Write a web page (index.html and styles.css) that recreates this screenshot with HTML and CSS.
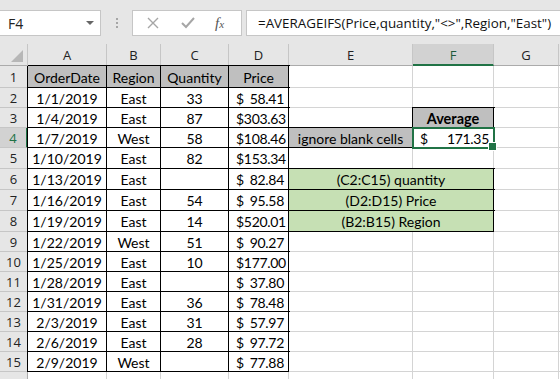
FILE: index.html
```html
<!DOCTYPE html>
<html>
<head>
<meta charset="UTF-8">
<title>AVERAGEIFS</title>
<link rel="stylesheet" href="styles.css">
</head>
<body>
<div class="topbar">
	<div class="namebox"><span>F4</span><span class="drop"></span></div>
	<div class="dots"><i></i><i></i><i></i></div>
	<div class="fnbox">
		<svg width="12" height="12" viewBox="0 0 12 12"><path d="M1 1L11 11M11 1L1 11" stroke="#a6a6a6" stroke-width="1.4" fill="none"/></svg>
		<svg width="14" height="12" viewBox="0 0 14 12"><path d="M1 6L5 10L13 1" stroke="#a6a6a6" stroke-width="2" fill="none"/></svg>
		<span class="fx">f<small>x</small></span>
	</div>
	<div class="formula">=AVERAGEIFS(Price,quantity,"&lt;&gt;",Region,"East")</div>
</div>

<div class="sheet">
	<div class="corner"><span class="tri"></span></div>
	<div class="ch">A</div><div class="ch">B</div><div class="ch">C</div><div class="ch">D</div><div class="ch">E</div><div class="ch on">F</div><div class="ch">G</div><div class="ch"></div>

	<div class="rh">1</div>
	<div class="c tb hd">OrderDate</div><div class="c tb hd">Region</div><div class="c tb hd">Quantity</div><div class="c tb hd">Price</div>
	<div class="c"></div><div class="c"></div><div class="c"></div><div class="c"></div>

	<div class="rh">2</div>
	<div class="c tb">1/1/2019</div><div class="c tb">East</div><div class="c tb">33</div><div class="c tb acc"><span>$</span><span>58.41</span></div>
	<div class="c"></div><div class="c"></div><div class="c"></div><div class="c"></div>

	<div class="rh">3</div>
	<div class="c tb">1/4/2019</div><div class="c tb">East</div><div class="c tb">87</div><div class="c tb acc"><span>$</span><span>303.63</span></div>
	<div class="c"></div><div class="c tb hd bold">Average</div><div class="c"></div><div class="c"></div>

	<div class="rh on">4</div>
	<div class="c tb">1/7/2019</div><div class="c tb">West</div><div class="c tb">58</div><div class="c tb acc"><span>$</span><span>108.46</span></div>
	<div class="c tb hd">ignore blank cells</div><div class="c tb acc sel"><span>$</span><span>171.35</span></div><div class="c"></div><div class="c"></div>

	<div class="rh">5</div>
	<div class="c tb">1/10/2019</div><div class="c tb">East</div><div class="c tb">82</div><div class="c tb acc"><span>$</span><span>153.34</span></div>
	<div class="c"></div><div class="c"></div><div class="c"></div><div class="c"></div>

	<div class="rh">6</div>
	<div class="c tb">1/13/2019</div><div class="c tb">East</div><div class="c tb"></div><div class="c tb acc"><span>$</span><span>82.84</span></div>
	<div class="c tb gr span2">(C2:C15) quantity</div><div class="c"></div><div class="c"></div>

	<div class="rh">7</div>
	<div class="c tb">1/16/2019</div><div class="c tb">East</div><div class="c tb">54</div><div class="c tb acc"><span>$</span><span>95.58</span></div>
	<div class="c tb gr span2">(D2:D15) Price</div><div class="c"></div><div class="c"></div>

	<div class="rh">8</div>
	<div class="c tb">1/19/2019</div><div class="c tb">East</div><div class="c tb">14</div><div class="c tb acc"><span>$</span><span>520.01</span></div>
	<div class="c tb gr span2">(B2:B15) Region</div><div class="c"></div><div class="c"></div>

	<div class="rh">9</div>
	<div class="c tb">1/22/2019</div><div class="c tb">West</div><div class="c tb">51</div><div class="c tb acc"><span>$</span><span>90.27</span></div>
	<div class="c"></div><div class="c"></div><div class="c"></div><div class="c"></div>

	<div class="rh">10</div>
	<div class="c tb">1/25/2019</div><div class="c tb">East</div><div class="c tb">10</div><div class="c tb acc"><span>$</span><span>177.00</span></div>
	<div class="c"></div><div class="c"></div><div class="c"></div><div class="c"></div>

	<div class="rh">11</div>
	<div class="c tb">1/28/2019</div><div class="c tb">East</div><div class="c tb"></div><div class="c tb acc"><span>$</span><span>37.80</span></div>
	<div class="c"></div><div class="c"></div><div class="c"></div><div class="c"></div>

	<div class="rh">12</div>
	<div class="c tb">1/31/2019</div><div class="c tb">East</div><div class="c tb">36</div><div class="c tb acc"><span>$</span><span>78.48</span></div>
	<div class="c"></div><div class="c"></div><div class="c"></div><div class="c"></div>

	<div class="rh">13</div>
	<div class="c tb">2/3/2019</div><div class="c tb">East</div><div class="c tb">31</div><div class="c tb acc"><span>$</span><span>57.97</span></div>
	<div class="c"></div><div class="c"></div><div class="c"></div><div class="c"></div>

	<div class="rh">14</div>
	<div class="c tb">2/6/2019</div><div class="c tb">East</div><div class="c tb">28</div><div class="c tb acc"><span>$</span><span>97.72</span></div>
	<div class="c"></div><div class="c"></div><div class="c"></div><div class="c"></div>

	<div class="rh">15</div>
	<div class="c tb">2/9/2019</div><div class="c tb">West</div><div class="c tb"></div><div class="c tb acc"><span>$</span><span>77.88</span></div>
	<div class="c"></div><div class="c"></div><div class="c"></div><div class="c"></div>

	<div class="rh"></div>
	<div class="c"></div><div class="c"></div><div class="c"></div><div class="c"></div>
	<div class="c"></div><div class="c"></div><div class="c"></div><div class="c"></div>
</div>
</body>
</html>
```

FILE: styles.css
```css
* {
	margin: 0;
	padding: 0;
	box-sizing: border-box;
}

html, body {
	width: 560px;
	height: 379px;
	overflow: hidden;
}

body {
	background: #e6e6e6;
	font-family: "Lato", "Open Sans", sans-serif;
	color: #000;
}

/* formula bar */
.topbar {
	height: 44px;
	display: flex;
	padding-top: 10px;
}

.namebox {
	width: 101px;
	height: 26px;
	background: white;
	border: 1px solid #c6c6c6;
	border-left: none;
	display: flex;
	align-items: center;
	justify-content: space-between;
	padding: 0 6px 0 8px;
	font-family: "Open Sans", sans-serif;
	font-size: 14px;
	color: #222;
}

.drop {
	width: 0;
	height: 0;
	border-left: 4px solid transparent;
	border-right: 4px solid transparent;
	border-top: 4px solid #666;
}

.dots {
	width: 31px;
	display: flex;
	flex-direction: column;
	align-items: center;
	justify-content: center;
	gap: 2px;
	height: 26px;
}

.dots i {
	width: 2px;
	height: 2px;
	background: #a6a6a6;
}

.fnbox {
	width: 110px;
	height: 26px;
	background: white;
	border: 1px solid #c6c6c6;
	display: flex;
	align-items: center;
	padding-left: 14px;
	gap: 22px;
}

.fx {
	font-family: "Liberation Serif", serif;
	font-style: italic;
	font-size: 15px;
	color: #555;
	margin-left: -2px;
}

.fx small {
	font-size: 11px;
}

.formula {
	flex: 1;
	height: 26px;
	margin-left: 4px;
	background: white;
	border: 1px solid #c6c6c6;
	border-right: none;
	padding-left: 11px;
	font-family: "Open Sans", sans-serif;
	font-size: 13.4px;
	line-height: 24px;
	color: #111;
	white-space: nowrap;
}

/* grid */
.sheet {
	display: grid;
	grid-template-columns: 28px 79px 54px 68px 60px 124px 81px 65px 10px;
	grid-template-rows: 22px 22px 20px 20px 20px 21px 21px 21px 21px 20px 20px 20px 20px 20px 20px 20px 20px;
	background: white;
}

.corner, .ch, .rh {
	background: #e6e6e6;
	font-family: "Open Sans", sans-serif;
	font-size: 13px;
	color: #222;
	display: flex;
	align-items: center;
	justify-content: center;
}

.corner {
	border-right: 1px solid #c6c6c6;
	border-bottom: 1px solid #ababab;
	position: relative;
}

.tri {
	position: absolute;
	right: 4px;
	bottom: 3px;
	width: 0;
	height: 0;
	border-left: 12px solid transparent;
	border-bottom: 12px solid #b7b7b7;
}

.ch {
	border-right: 1px solid #c6c6c6;
	border-bottom: 1px solid #ababab;
	padding-top: 1px;
}

.ch.on {
	background: #d2d2d2;
	color: #1e5a3a;
	border-bottom: 2px solid #217346;
}

.rh {
	border-right: 1px solid #ababab;
	border-bottom: 1px solid #c6c6c6;
	font-size: 13px;
}

.rh.on {
	background: #d2d2d2;
	color: #217346;
	border-right: 2px solid #217346;
}

.c {
	background: white;
	border-right: 1px solid #d4d4d4;
	border-bottom: 1px solid #d4d4d4;
	font-size: 14px;
	display: flex;
	align-items: center;
	justify-content: center;
	white-space: nowrap;
	padding-top: 1px;
}

.tb {
	border-right-color: #000;
	border-bottom-color: #000;
	box-shadow: 0 0 0 1px #000;
}

.hd {
	background: #bfbfbf;
}

.bold {
	font-weight: bold;
	font-size: 14.5px;
}

.gr {
	background: #c6e0b4;
}

.span2 {
	grid-column: span 2;
}

.acc {
	justify-content: space-between;
	padding: 1px 4px 0 7px;
	letter-spacing: -0.3px;
}

.sel {
	position: relative;
	z-index: 1;
	outline: 2px solid #217346;
	outline-offset: -1px;
}

.sel::after {
	content: "";
	position: absolute;
	right: -4px;
	bottom: -4px;
	width: 7px;
	height: 7px;
	background: #217346;
	border: 1px solid white;
}
```
